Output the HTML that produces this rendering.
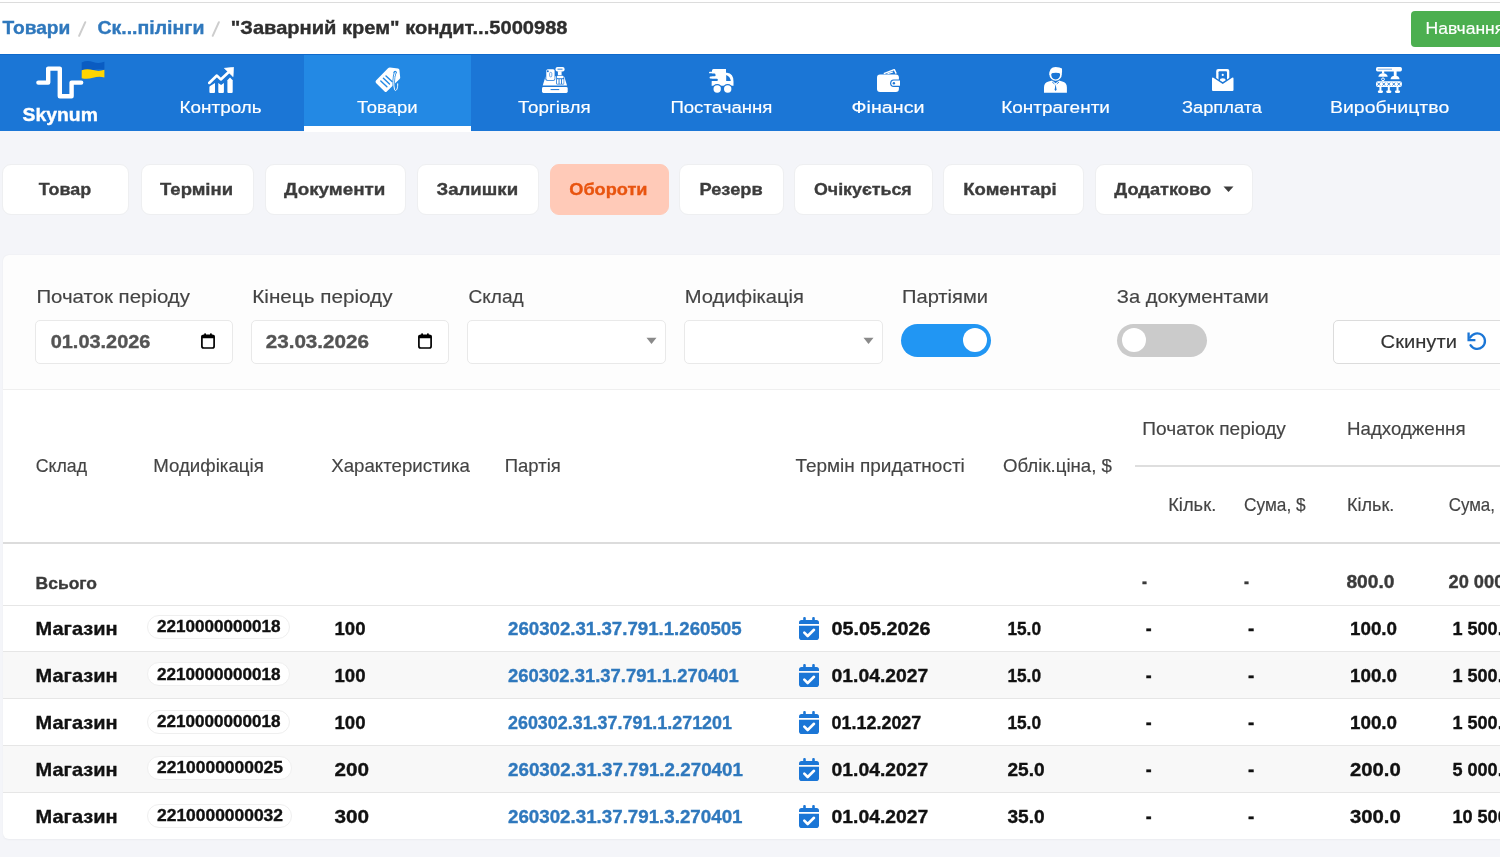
<!DOCTYPE html>
<html><head><meta charset="utf-8"><style>
html,body{margin:0;padding:0;}
body{width:1500px;height:857px;overflow:hidden;position:relative;background:#f4f5f9;font-family:"Liberation Sans",sans-serif;}
.t{position:absolute;white-space:nowrap;transform-origin:0 0;}
</style></head><body>
<div style="position:absolute;left:0px;top:0px;width:1500px;height:54px;background:#fff"></div>
<div style="position:absolute;left:0px;top:2px;width:1500px;height:1px;background:#dcdcdc"></div>
<svg style="position:absolute;left:70px;top:15px;" width="160" height="30" viewBox="70 15 160 30"><path d="M85.3 22.2L79.1 35.8M218.9 22.2L212.7 35.8" stroke="#cdcdcd" stroke-width="2" stroke-linecap="round"/></svg>
<div style="position:absolute;left:1411px;top:11px;width:120px;height:36px;background:#4caf50;border-radius:4px"></div>
<div style="position:absolute;left:0px;top:54px;width:1500px;height:77px;background:#1b76d6"></div>
<div style="position:absolute;left:304px;top:54px;width:167px;height:77px;background:#2389e4"></div>
<div style="position:absolute;left:0px;top:54px;width:1500px;height:1px;background:#0f6acc"></div>
<div style="position:absolute;left:304px;top:126px;width:167px;height:5px;background:#fff"></div>
<div style="position:absolute;left:304px;top:131px;width:167px;height:1px;background:#fff"></div>
<svg style="position:absolute;left:20px;top:55px;" width="100" height="50" viewBox="20 55 100 50"><path d="M38.4 82.6H48.2V68.6H59.8V96.3H71.6V82.6H81.2" fill="none" stroke="#fff" stroke-width="4.4" stroke-linecap="round" stroke-linejoin="round"/><path d="M81.7 62.5 Q87 60 93 62 T104.4 61.8 V70 Q99 68.5 93 70.3 T81.7 70.5Z" fill="#0a5cc2"/><path d="M81.7 70.3 Q87 68.3 93 70.1 T104.4 69.8 V77.5 Q99 76 93 77.8 T81.7 78.2Z" fill="#ffd500"/></svg>
<svg style="position:absolute;left:207.6px;top:67px;" width="26" height="26" viewBox="0 0 26 26"><polyline points="1.2,15.9 8.9,8.6 12.8,12.4 20.5,5.2" fill="none" stroke="#fff" stroke-width="2.7" stroke-linecap="round" stroke-linejoin="round"/><path d="M16.3,1.3 L25.6,0.2 L25.1,9.7 Z" fill="#fff" stroke="#fff" stroke-width="0.6" stroke-linejoin="round"/><path d="M1.4,25 V20.4 Q1.4,19.6 2.1,19.1 L7,16 V25 Q7,26 6,26 H2.4 Q1.4,26 1.4,25 Z" fill="#fff"/><path d="M10.3,25 V15.9 L13.1,18 L15.9,15.9 V25 Q15.9,26 14.9,26 H11.3 Q10.3,26 10.3,25 Z" fill="#fff"/><path d="M19.4,25 V13.2 L22,10.6 L24.7,13.2 V25 Q24.7,26 23.7,26 H20.4 Q19.4,26 19.4,25 Z" fill="#fff"/></svg>
<svg style="position:absolute;left:374.6px;top:67.2px;" width="26" height="26" viewBox="0 0 26 26"><path d="M1,13.6 L13,1.2 Q13.8,0.4 15,0.5 L23,1.4 Q24.2,1.6 24.4,2.8 L25.2,10.4 Q25.3,11.3 24.6,12 L11.8,24.6 Q10.7,25.6 9.6,24.6 L1,16 Q0,14.8 1,13.6Z" fill="#fff"/><g stroke="#2389e4" stroke-width="1.4" stroke-linecap="round"><line x1="5.8" y1="14" x2="11.9" y2="19.8"/><line x1="8.4" y1="11.2" x2="14.5" y2="17"/><line x1="11" y1="8.9" x2="17" y2="14.5"/></g><circle cx="20.1" cy="5.3" r="1.6" fill="#2389e4"/><path d="M20.2,5.5 C18.4,10 18.3,18.5 19.6,22.8 C20.6,24.8 23,22.5 22.7,16.8" fill="none" stroke="#2389e4" stroke-width="2.6" stroke-linecap="round"/><path d="M20.2,5.5 C18.4,10 18.3,18.5 19.6,22.8 C20.6,24.8 23,22.5 22.7,16.8" fill="none" stroke="#fff" stroke-width="1" stroke-linecap="round"/></svg>
<svg style="position:absolute;left:541.5px;top:67px;" width="26" height="26" viewBox="0 0 26 26"><rect x="0" y="20" width="25.7" height="5.9" rx="1.4" fill="#fff"/><line x1="8.6" y1="22.6" x2="17.2" y2="22.6" stroke="#1b76d6" stroke-width="1"/><path d="M0.7,18.6 L3.3,10.2 Q3.6,9.3 4.5,9.3 H21.3 Q22.2,9.3 22.5,10.2 L25,18.6 Z" fill="#fff"/><rect x="3.3" y="1.6" width="10" height="12.2" rx="1.8" fill="#1b76d6"/><rect x="4.3" y="2.3" width="8.3" height="10.7" rx="1.5" fill="#fff"/><circle cx="5.8" cy="4.3" r="1" fill="#1b76d6"/><rect x="7.6" y="5.4" width="2.2" height="4.5" rx="1" fill="none" stroke="#1b76d6" stroke-width="0.6"/><rect x="13.5" y="0" width="9.1" height="4.4" rx="2" fill="#fff"/><line x1="15.5" y1="2.2" x2="20.5" y2="2.2" stroke="#1b76d6" stroke-width="0.9"/><rect x="15.9" y="4.2" width="3.7" height="4.5" fill="#fff"/><rect x="14.2" y="8.3" width="8" height="9.3" rx="1" fill="#1b76d6"/><rect x="14.9" y="8.8" width="6.7" height="2.4" rx="1" fill="#fff"/><rect x="15" y="12.2" width="1.6" height="4.6" fill="#fff"/><rect x="17.5" y="12.2" width="1.6" height="4.6" fill="#fff"/><rect x="20" y="12.2" width="1.6" height="4.6" fill="#fff"/></svg>
<svg style="position:absolute;left:709.2px;top:68.6px;" width="25" height="24" viewBox="0 0 25 24"><path d="M3,1.5 Q3,0 4.5,0 H17 V3.7 H18 Q24.5,4.2 24.5,12.5 V16.8 H2.6 Z" fill="#fff"/><rect x="0" y="2.8" width="5" height="1.8" rx="0.9" fill="#fff"/><rect x="-1" y="4.6" width="7.5" height="2.9" rx="1.2" fill="#1b76d6"/><rect x="0.6" y="7.5" width="8" height="2.3" rx="1.1" fill="#fff"/><rect x="-1" y="9.8" width="9.9" height="2.3" rx="1.1" fill="#1b76d6"/><path d="M17.2,5.9 V12.1 H21.8 Q21.2,7.3 17.2,5.9 Z" fill="#1b76d6"/><circle cx="8.2" cy="20" r="5" fill="#1b76d6"/><circle cx="18.7" cy="20" r="5" fill="#1b76d6"/><circle cx="8.2" cy="20" r="3.7" fill="#fff"/><circle cx="18.7" cy="20" r="3.7" fill="#fff"/></svg>
<svg style="position:absolute;left:876.9px;top:68.6px;" width="24" height="24" viewBox="0 0 24 24"><polyline points="6.8,4.6 17.3,0.6 19.2,4.6" fill="none" stroke="#fff" stroke-width="1.4" stroke-linejoin="round"/><line x1="10.5" y1="4.6" x2="16" y2="3" stroke="#fff" stroke-width="1.2"/><rect x="0" y="5.6" width="21.9" height="17.5" rx="3" fill="#fff"/><path d="M23.5,10.4 H16.6 Q13.1,10.4 13.1,14.2 Q13.1,18 16.6,18 H23.5 Z" fill="#1b76d6"/><path d="M23,11.6 H16.8 Q14.3,11.6 14.3,14.2 Q14.3,16.8 16.8,16.8 H23 Z" fill="#fff"/><circle cx="16.9" cy="14.2" r="1.2" fill="#1b76d6"/></svg>
<svg style="position:absolute;left:1044px;top:67.2px;" width="23" height="26" viewBox="0 0 23 26"><path d="M0,25.7 V20.5 Q0,15.8 4.6,14.6 L8.2,13.6 L11.6,16.2 L15,13.6 L18.3,14.6 Q22.9,15.8 22.9,20.5 V25.7 Z" fill="#fff"/><path d="M7.6,12.2 Q11.6,15.6 15.6,12.2" fill="none" stroke="#1b76d6" stroke-width="1.1"/><ellipse cx="11.6" cy="7.4" rx="6.2" ry="6.3" fill="#fff"/><path d="M7.2,6.6 Q11.6,4.4 16.1,6.3 Q16.4,12.3 11.6,12.5 Q6.9,12.3 7.2,6.6 Z" fill="#1b76d6"/><path d="M5.4,8 Q5,0.2 11.6,0 Q16,0 18,1.6 Q18.4,5 17.4,7.6 Q15,5.4 11.6,5.6 Q8,5.6 5.4,8Z" fill="#fff"/><path d="M8.2,15 L10.4,16.9 M15,15 L12.8,16.9" stroke="#1b76d6" stroke-width="0.9" fill="none"/><path d="M11.6,17.3 L10.6,22.8 L11.6,23.9 L12.6,22.8 Z" fill="#1b76d6"/></svg>
<svg style="position:absolute;left:1211.7px;top:69.1px;" width="22" height="22" viewBox="0 0 22 22"><rect x="4.2" y="0" width="13.1" height="12" rx="2" fill="#fff"/><rect x="6.5" y="2.3" width="8.5" height="10" rx="1" fill="#1b76d6"/><circle cx="10.75" cy="5.9" r="1.1" fill="#fff"/><ellipse cx="10.75" cy="11.3" rx="2.9" ry="2" fill="#fff"/><polyline points="-0.5,7.6 10.75,14.6 22,7.6" fill="none" stroke="#1b76d6" stroke-width="2.4"/><path d="M-1,9 L10.75,16.5 L22.5,9 V16 H-1Z" fill="#1b76d6"/><path d="M0,9.6 Q0,8 1.4,8.7 L10.75,14.9 L20.1,8.7 Q21.5,8 21.5,9.6 V20.9 Q21.5,21.9 20.5,21.9 H1 Q0,21.9 0,20.9 Z" fill="#fff"/></svg>
<svg style="position:absolute;left:1376.4px;top:67px;" width="26" height="26" viewBox="0 0 26 26"><rect x="0" y="0" width="25.9" height="4.4" rx="1.6" fill="#fff"/><line x1="1.8" y1="2.2" x2="16" y2="2.2" stroke="#1b76d6" stroke-width="0.6"/><rect x="6" y="4" width="2.2" height="2.6" fill="#fff"/><path d="M2.3,9.7 Q2.8,6.2 7.1,6.2 Q11.3,6.2 11.7,9.7 Z" fill="#fff"/><rect x="17.8" y="4" width="2.8" height="5.2" fill="#fff"/><path d="M14.5,12.2 Q15,8.8 19.1,8.8 Q23.2,8.8 23.6,12.2 Z" fill="#fff"/><circle cx="7" cy="12.3" r="1.4" fill="none" stroke="#fff" stroke-width="1"/><rect x="0" y="14.2" width="25.9" height="5.8" rx="2" fill="#fff"/><path d="M1.4,15.6 L4.199999999999999,18.6 M4.199999999999999,15.6 L1.4,18.6" stroke="#1b76d6" stroke-width="0.85"/><path d="M6.4,15.6 L9.2,18.6 M9.2,15.6 L6.4,18.6" stroke="#1b76d6" stroke-width="0.85"/><path d="M11.4,15.6 L14.200000000000001,18.6 M14.200000000000001,15.6 L11.4,18.6" stroke="#1b76d6" stroke-width="0.85"/><path d="M16.400000000000002,15.6 L19.2,18.6 M19.2,15.6 L16.400000000000002,18.6" stroke="#1b76d6" stroke-width="0.85"/><path d="M21.400000000000002,15.6 L24.2,18.6 M24.2,15.6 L21.400000000000002,18.6" stroke="#1b76d6" stroke-width="0.85"/><rect x="3.4000000000000004" y="20" width="2" height="4" fill="#fff"/><rect x="1.8000000000000003" y="23.6" width="5.2" height="2.3" rx="1.1" fill="#fff"/><rect x="11.8" y="20" width="2" height="4" fill="#fff"/><rect x="10.200000000000001" y="23.6" width="5.2" height="2.3" rx="1.1" fill="#fff"/><rect x="20.5" y="20" width="2" height="4" fill="#fff"/><rect x="18.9" y="23.6" width="5.2" height="2.3" rx="1.1" fill="#fff"/></svg>
<div style="position:absolute;left:1.5px;top:163.6px;width:127px;height:51.2px;background:#fff;border-radius:9px;box-sizing:border-box;border:1px solid #eeeff1"></div>
<div style="position:absolute;left:140.5px;top:163.6px;width:113px;height:51.2px;background:#fff;border-radius:9px;box-sizing:border-box;border:1px solid #eeeff1"></div>
<div style="position:absolute;left:264.5px;top:163.6px;width:141px;height:51.2px;background:#fff;border-radius:9px;box-sizing:border-box;border:1px solid #eeeff1"></div>
<div style="position:absolute;left:416.5px;top:163.6px;width:122px;height:51.2px;background:#fff;border-radius:9px;box-sizing:border-box;border:1px solid #eeeff1"></div>
<div style="position:absolute;left:549.5px;top:163.6px;width:119px;height:51.2px;background:#ffcab8;border-radius:9px;box-sizing:border-box;border:1px solid #ffcab8"></div>
<div style="position:absolute;left:678.5px;top:163.6px;width:105px;height:51.2px;background:#fff;border-radius:9px;box-sizing:border-box;border:1px solid #eeeff1"></div>
<div style="position:absolute;left:793.5px;top:163.6px;width:139px;height:51.2px;background:#fff;border-radius:9px;box-sizing:border-box;border:1px solid #eeeff1"></div>
<div style="position:absolute;left:942.5px;top:163.6px;width:141px;height:51.2px;background:#fff;border-radius:9px;box-sizing:border-box;border:1px solid #eeeff1"></div>
<div style="position:absolute;left:1094.5px;top:163.6px;width:158px;height:51.2px;background:#fff;border-radius:9px;box-sizing:border-box;border:1px solid #eeeff1"></div>
<svg style="position:absolute;left:1223px;top:186.3px;" width="11" height="7" viewBox="0 0 11 7"><path d="M0.5 0.5H10.5L5.5 6Z" fill="#3c3c3c"/></svg>
<div style="position:absolute;left:3px;top:254.5px;width:1600px;height:135px;background:#fdfdfd;border-radius:6px 0 0 0;box-shadow:0 0 2px rgba(0,0,0,0.06)"></div>
<div style="position:absolute;left:3px;top:389px;width:1600px;height:1px;background:#efefef"></div>
<div style="position:absolute;left:35px;top:320px;width:198px;height:43.5px;background:#fff;border:1px solid #e9e9e9;border-radius:5px;box-sizing:border-box"></div>
<div style="position:absolute;left:251px;top:320px;width:198px;height:43.5px;background:#fff;border:1px solid #e9e9e9;border-radius:5px;box-sizing:border-box"></div>
<svg style="position:absolute;left:201px;top:333px;" width="14" height="16" viewBox="0 0 14 16"><rect x="0.9" y="2.4" width="12.2" height="12.6" rx="1.8" fill="none" stroke="#000" stroke-width="1.7"/><rect x="0.5" y="2" width="13" height="3.2" rx="1" fill="#000"/><rect x="3.2" y="0.3" width="1.8" height="3" rx="0.8" fill="#000"/><rect x="9" y="0.3" width="1.8" height="3" rx="0.8" fill="#000"/></svg>
<svg style="position:absolute;left:417.5px;top:333px;" width="14" height="16" viewBox="0 0 14 16"><rect x="0.9" y="2.4" width="12.2" height="12.6" rx="1.8" fill="none" stroke="#000" stroke-width="1.7"/><rect x="0.5" y="2" width="13" height="3.2" rx="1" fill="#000"/><rect x="3.2" y="0.3" width="1.8" height="3" rx="0.8" fill="#000"/><rect x="9" y="0.3" width="1.8" height="3" rx="0.8" fill="#000"/></svg>
<div style="position:absolute;left:467px;top:320px;width:199px;height:43.5px;background:#fff;border:1px solid #e9e9e9;border-radius:5px;box-sizing:border-box"></div>
<svg style="position:absolute;left:646px;top:337px;" width="11" height="8" viewBox="0 0 11 8"><path d="M0.5 0.8H10.5L5.5 7Z" fill="#8a8a8a"/></svg>
<div style="position:absolute;left:684px;top:320px;width:199px;height:43.5px;background:#fff;border:1px solid #e9e9e9;border-radius:5px;box-sizing:border-box"></div>
<svg style="position:absolute;left:863px;top:337px;" width="11" height="8" viewBox="0 0 11 8"><path d="M0.5 0.8H10.5L5.5 7Z" fill="#8a8a8a"/></svg>
<div style="position:absolute;left:900.5px;top:323.7px;width:90px;height:33.3px;background:#2196f3;border-radius:16.7px"></div>
<div style="position:absolute;left:963px;top:328.3px;width:24px;height:24px;background:#fff;border-radius:50%"></div>
<div style="position:absolute;left:1117px;top:323.7px;width:90px;height:33.3px;background:#cbcbcb;border-radius:16.7px"></div>
<div style="position:absolute;left:1121.5px;top:328.3px;width:24px;height:24px;background:#fff;border-radius:50%"></div>
<div style="position:absolute;left:1333px;top:320px;width:300px;height:44px;background:#fff;border:1px solid #dcdcdc;border-radius:5px;box-sizing:border-box"></div>
<svg style="position:absolute;left:1466px;top:331px;" width="21" height="21" viewBox="1466 331 21 21"><path d="M1470.5 345.2 A7.8 7.8 0 1 0 1470.2 337.6" fill="none" stroke="#1b76d6" stroke-width="2.3" stroke-linecap="round"/><path d="M1468.6 332.4 V340.1 H1475.4" fill="none" stroke="#1b76d6" stroke-width="2.3" stroke-linejoin="miter"/></svg>
<div style="position:absolute;left:3px;top:390px;width:1600px;height:449.2px;background:#fff;border-radius:0 0 0 6px;box-shadow:0 1px 2px rgba(0,0,0,0.04)"></div>
<div style="position:absolute;left:1135px;top:465px;width:400px;height:2px;background:#dedede"></div>
<div style="position:absolute;left:3px;top:542px;width:1600px;height:2px;background:#dcdcdc"></div>
<div style="position:absolute;left:3px;top:604.7px;width:1600px;height:1px;background:#e6e6e6"></div>
<div style="position:absolute;left:147px;top:615px;width:143px;height:24px;background:#fff;border:1px solid #efefef;border-radius:12px;box-sizing:border-box"></div>
<svg style="position:absolute;left:799px;top:617px;" width="20" height="23" viewBox="0 0 20 23"><rect x="4.2" y="0" width="2.6" height="4" rx="1.1" fill="#1b76d6"/><rect x="13.2" y="0" width="2.6" height="4" rx="1.1" fill="#1b76d6"/><path d="M0 5.5Q0 3 2.5 3H17.5Q20 3 20 5.5V6.9H0Z" fill="#1b76d6"/><path d="M0 8.8H20V20.6Q20 23.1 17.5 23.1H2.5Q0 23.1 0 20.6Z" fill="#1b76d6"/><path d="M5.3 15.6L8.7 19L15 12.8" fill="none" stroke="#fff" stroke-width="2.6" stroke-linecap="round" stroke-linejoin="round"/></svg>
<div style="position:absolute;left:3px;top:651.4px;width:1600px;height:46.89999999999998px;background:#f8f8f8"></div>
<div style="position:absolute;left:3px;top:651.4px;width:1600px;height:1px;background:#e6e6e6"></div>
<div style="position:absolute;left:147px;top:662px;width:143px;height:24px;background:#fff;border:1px solid #efefef;border-radius:12px;box-sizing:border-box"></div>
<svg style="position:absolute;left:799px;top:664px;" width="20" height="23" viewBox="0 0 20 23"><rect x="4.2" y="0" width="2.6" height="4" rx="1.1" fill="#1b76d6"/><rect x="13.2" y="0" width="2.6" height="4" rx="1.1" fill="#1b76d6"/><path d="M0 5.5Q0 3 2.5 3H17.5Q20 3 20 5.5V6.9H0Z" fill="#1b76d6"/><path d="M0 8.8H20V20.6Q20 23.1 17.5 23.1H2.5Q0 23.1 0 20.6Z" fill="#1b76d6"/><path d="M5.3 15.6L8.7 19L15 12.8" fill="none" stroke="#fff" stroke-width="2.6" stroke-linecap="round" stroke-linejoin="round"/></svg>
<div style="position:absolute;left:3px;top:698.3px;width:1600px;height:1px;background:#e6e6e6"></div>
<div style="position:absolute;left:147px;top:710px;width:143px;height:24px;background:#fff;border:1px solid #efefef;border-radius:12px;box-sizing:border-box"></div>
<svg style="position:absolute;left:799px;top:711px;" width="20" height="23" viewBox="0 0 20 23"><rect x="4.2" y="0" width="2.6" height="4" rx="1.1" fill="#1b76d6"/><rect x="13.2" y="0" width="2.6" height="4" rx="1.1" fill="#1b76d6"/><path d="M0 5.5Q0 3 2.5 3H17.5Q20 3 20 5.5V6.9H0Z" fill="#1b76d6"/><path d="M0 8.8H20V20.6Q20 23.1 17.5 23.1H2.5Q0 23.1 0 20.6Z" fill="#1b76d6"/><path d="M5.3 15.6L8.7 19L15 12.8" fill="none" stroke="#fff" stroke-width="2.6" stroke-linecap="round" stroke-linejoin="round"/></svg>
<div style="position:absolute;left:3px;top:745.3px;width:1600px;height:46.90000000000009px;background:#f8f8f8"></div>
<div style="position:absolute;left:3px;top:745.3px;width:1600px;height:1px;background:#e6e6e6"></div>
<div style="position:absolute;left:147px;top:756px;width:145px;height:24px;background:#fff;border:1px solid #efefef;border-radius:12px;box-sizing:border-box"></div>
<svg style="position:absolute;left:799px;top:758px;" width="20" height="23" viewBox="0 0 20 23"><rect x="4.2" y="0" width="2.6" height="4" rx="1.1" fill="#1b76d6"/><rect x="13.2" y="0" width="2.6" height="4" rx="1.1" fill="#1b76d6"/><path d="M0 5.5Q0 3 2.5 3H17.5Q20 3 20 5.5V6.9H0Z" fill="#1b76d6"/><path d="M0 8.8H20V20.6Q20 23.1 17.5 23.1H2.5Q0 23.1 0 20.6Z" fill="#1b76d6"/><path d="M5.3 15.6L8.7 19L15 12.8" fill="none" stroke="#fff" stroke-width="2.6" stroke-linecap="round" stroke-linejoin="round"/></svg>
<div style="position:absolute;left:3px;top:792.2px;width:1600px;height:1px;background:#e6e6e6"></div>
<div style="position:absolute;left:147px;top:804px;width:145px;height:24px;background:#fff;border:1px solid #efefef;border-radius:12px;box-sizing:border-box"></div>
<svg style="position:absolute;left:799px;top:805px;" width="20" height="23" viewBox="0 0 20 23"><rect x="4.2" y="0" width="2.6" height="4" rx="1.1" fill="#1b76d6"/><rect x="13.2" y="0" width="2.6" height="4" rx="1.1" fill="#1b76d6"/><path d="M0 5.5Q0 3 2.5 3H17.5Q20 3 20 5.5V6.9H0Z" fill="#1b76d6"/><path d="M0 8.8H20V20.6Q20 23.1 17.5 23.1H2.5Q0 23.1 0 20.6Z" fill="#1b76d6"/><path d="M5.3 15.6L8.7 19L15 12.8" fill="none" stroke="#fff" stroke-width="2.6" stroke-linecap="round" stroke-linejoin="round"/></svg>
<svg style="position:absolute;left:0;top:0;will-change:transform" width="1500" height="857" font-family="Liberation Sans">
<text x="2.40" y="34.40" font-size="18.55" font-weight="bold" fill="#2f78bd" stroke="#2f78bd" stroke-width="0.35" textLength="68.00" lengthAdjust="spacingAndGlyphs">Товари</text>
<text x="97.40" y="34.40" font-size="18.55" font-weight="bold" fill="#2f78bd" stroke="#2f78bd" stroke-width="0.35" textLength="107.01" lengthAdjust="spacingAndGlyphs">Ск...пілінги</text>
<text x="230.80" y="34.40" font-size="18.55" font-weight="bold" fill="#2e2e2e" stroke="#2e2e2e" stroke-width="0.35" textLength="336.69" lengthAdjust="spacingAndGlyphs">&quot;Заварний крем&quot; кондит...5000988</text>
<text x="1425.60" y="34.00" font-size="16.23" fill="#fff" stroke="#fff" stroke-width="0.15" textLength="78.67" lengthAdjust="spacingAndGlyphs">Навчання</text>
<text x="179.60" y="112.60" font-size="16.67" fill="#fff" stroke="#fff" stroke-width="0.15" textLength="82.00" lengthAdjust="spacingAndGlyphs">Контроль</text>
<text x="357.00" y="112.60" font-size="16.67" fill="#fff" stroke="#fff" stroke-width="0.15" textLength="60.60" lengthAdjust="spacingAndGlyphs">Товари</text>
<text x="518.00" y="112.60" font-size="16.67" fill="#fff" stroke="#fff" stroke-width="0.15" textLength="72.60" lengthAdjust="spacingAndGlyphs">Торгівля</text>
<text x="670.40" y="112.60" font-size="16.67" fill="#fff" stroke="#fff" stroke-width="0.15" textLength="102.00" lengthAdjust="spacingAndGlyphs">Постачання</text>
<text x="851.60" y="112.60" font-size="16.67" fill="#fff" stroke="#fff" stroke-width="0.15" textLength="72.89" lengthAdjust="spacingAndGlyphs">Фінанси</text>
<text x="1001.20" y="112.60" font-size="16.67" fill="#fff" stroke="#fff" stroke-width="0.15" textLength="108.80" lengthAdjust="spacingAndGlyphs">Контрагенти</text>
<text x="1182.00" y="112.60" font-size="16.67" fill="#fff" stroke="#fff" stroke-width="0.15" textLength="79.99" lengthAdjust="spacingAndGlyphs">Зарплата</text>
<text x="1330.00" y="112.60" font-size="16.67" fill="#fff" stroke="#fff" stroke-width="0.15" textLength="119.21" lengthAdjust="spacingAndGlyphs">Виробництво</text>
<text x="22.60" y="120.60" font-size="18.26" font-weight="bold" fill="#fff" stroke="#fff" stroke-width="0.35" textLength="75.30" lengthAdjust="spacingAndGlyphs">Skynum</text>
<text x="38.80" y="195.30" font-size="17.39" font-weight="bold" fill="#3c3c3c" stroke="#3c3c3c" stroke-width="0.35" textLength="52.40" lengthAdjust="spacingAndGlyphs">Товар</text>
<text x="160.00" y="195.30" font-size="17.39" font-weight="bold" fill="#3c3c3c" stroke="#3c3c3c" stroke-width="0.35" textLength="73.00" lengthAdjust="spacingAndGlyphs">Терміни</text>
<text x="284.00" y="195.30" font-size="17.39" font-weight="bold" fill="#3c3c3c" stroke="#3c3c3c" stroke-width="0.35" textLength="101.41" lengthAdjust="spacingAndGlyphs">Документи</text>
<text x="436.50" y="195.30" font-size="17.39" font-weight="bold" fill="#3c3c3c" stroke="#3c3c3c" stroke-width="0.35" textLength="81.61" lengthAdjust="spacingAndGlyphs">Залишки</text>
<text x="569.30" y="195.30" font-size="17.39" font-weight="bold" fill="#e8540f" stroke="#e8540f" stroke-width="0.35" textLength="78.19" lengthAdjust="spacingAndGlyphs">Обороти</text>
<text x="699.50" y="195.30" font-size="17.39" font-weight="bold" fill="#3c3c3c" stroke="#3c3c3c" stroke-width="0.35" textLength="63.20" lengthAdjust="spacingAndGlyphs">Резерв</text>
<text x="814.00" y="195.30" font-size="17.39" font-weight="bold" fill="#3c3c3c" stroke="#3c3c3c" stroke-width="0.35" textLength="97.70" lengthAdjust="spacingAndGlyphs">Очікується</text>
<text x="963.30" y="195.30" font-size="17.39" font-weight="bold" fill="#3c3c3c" stroke="#3c3c3c" stroke-width="0.35" textLength="93.39" lengthAdjust="spacingAndGlyphs">Коментарі</text>
<text x="1114.30" y="195.30" font-size="17.39" font-weight="bold" fill="#3c3c3c" stroke="#3c3c3c" stroke-width="0.35" textLength="96.71" lengthAdjust="spacingAndGlyphs">Додатково</text>
<text x="36.40" y="303.20" font-size="18.26" fill="#444" stroke="#444" stroke-width="0.15" textLength="153.60" lengthAdjust="spacingAndGlyphs">Початок періоду</text>
<text x="252.30" y="303.20" font-size="18.26" fill="#444" stroke="#444" stroke-width="0.15" textLength="140.21" lengthAdjust="spacingAndGlyphs">Кінець періоду</text>
<text x="468.50" y="303.20" font-size="18.26" fill="#444" stroke="#444" stroke-width="0.15" textLength="55.20" lengthAdjust="spacingAndGlyphs">Склад</text>
<text x="684.80" y="303.20" font-size="18.26" fill="#444" stroke="#444" stroke-width="0.15" textLength="119.19" lengthAdjust="spacingAndGlyphs">Модифікація</text>
<text x="902.00" y="303.20" font-size="18.26" fill="#444" stroke="#444" stroke-width="0.15" textLength="86.00" lengthAdjust="spacingAndGlyphs">Партіями</text>
<text x="1116.80" y="303.20" font-size="18.26" fill="#444" stroke="#444" stroke-width="0.15" textLength="152.00" lengthAdjust="spacingAndGlyphs">За документами</text>
<text x="50.70" y="347.80" font-size="17.97" font-weight="bold" fill="#545454" stroke="#545454" stroke-width="0.35" textLength="99.70" lengthAdjust="spacingAndGlyphs">01.03.2026</text>
<text x="265.70" y="347.80" font-size="17.97" font-weight="bold" fill="#545454" stroke="#545454" stroke-width="0.35" textLength="103.30" lengthAdjust="spacingAndGlyphs">23.03.2026</text>
<text x="1380.60" y="348.00" font-size="19.13" fill="#333" stroke="#333" stroke-width="0.15" textLength="76.30" lengthAdjust="spacingAndGlyphs">Скинути</text>
<text x="35.70" y="472.40" font-size="17.97" fill="#444" stroke="#444" stroke-width="0.15" textLength="51.30" lengthAdjust="spacingAndGlyphs">Склад</text>
<text x="153.20" y="472.40" font-size="17.97" fill="#444" stroke="#444" stroke-width="0.15" textLength="110.59" lengthAdjust="spacingAndGlyphs">Модифікація</text>
<text x="331.20" y="472.40" font-size="17.97" fill="#444" stroke="#444" stroke-width="0.15" textLength="138.78" lengthAdjust="spacingAndGlyphs">Характеристика</text>
<text x="504.80" y="472.40" font-size="17.97" fill="#444" stroke="#444" stroke-width="0.15" textLength="56.00" lengthAdjust="spacingAndGlyphs">Партія</text>
<text x="795.40" y="472.40" font-size="17.97" fill="#444" stroke="#444" stroke-width="0.15" textLength="169.41" lengthAdjust="spacingAndGlyphs">Термін придатності</text>
<text x="1003.00" y="472.40" font-size="17.97" fill="#444" stroke="#444" stroke-width="0.15" textLength="109.00" lengthAdjust="spacingAndGlyphs">Облік.ціна, $</text>
<text x="1142.30" y="434.70" font-size="17.97" fill="#444" stroke="#444" stroke-width="0.15" textLength="143.60" lengthAdjust="spacingAndGlyphs">Початок періоду</text>
<text x="1347.00" y="434.70" font-size="17.97" fill="#444" stroke="#444" stroke-width="0.15" textLength="118.51" lengthAdjust="spacingAndGlyphs">Надходження</text>
<text x="1168.20" y="510.60" font-size="17.97" fill="#444" stroke="#444" stroke-width="0.15" textLength="48.09" lengthAdjust="spacingAndGlyphs">Кільк.</text>
<text x="1244.00" y="510.60" font-size="17.97" fill="#444" stroke="#444" stroke-width="0.15" textLength="61.61" lengthAdjust="spacingAndGlyphs">Сума, $</text>
<text x="1347.00" y="510.60" font-size="17.97" fill="#444" stroke="#444" stroke-width="0.15" textLength="47.39" lengthAdjust="spacingAndGlyphs">Кільк.</text>
<text x="1448.70" y="510.60" font-size="17.97" fill="#444" stroke="#444" stroke-width="0.15" textLength="46.31" lengthAdjust="spacingAndGlyphs">Сума,</text>
<text x="35.60" y="588.50" font-size="17.25" font-weight="bold" fill="#3a3a3a" stroke="#3a3a3a" stroke-width="0.35" textLength="61.40" lengthAdjust="spacingAndGlyphs">Всього</text>
<text x="1142.00" y="588.40" font-size="17.54" font-weight="bold" fill="#3a3a3a" stroke="#3a3a3a" stroke-width="0.35" textLength="5.00" lengthAdjust="spacingAndGlyphs">-</text>
<text x="1244.00" y="588.40" font-size="17.54" font-weight="bold" fill="#3a3a3a" stroke="#3a3a3a" stroke-width="0.35" textLength="5.00" lengthAdjust="spacingAndGlyphs">-</text>
<text x="1346.40" y="588.40" font-size="17.54" font-weight="bold" fill="#3a3a3a" stroke="#3a3a3a" stroke-width="0.35" textLength="48.01" lengthAdjust="spacingAndGlyphs">800.0</text>
<text x="1448.50" y="588.40" font-size="17.54" font-weight="bold" fill="#3a3a3a" stroke="#3a3a3a" stroke-width="0.35" textLength="70.99" lengthAdjust="spacingAndGlyphs">20 000.0</text>
<text x="35.60" y="634.70" font-size="18.84" font-weight="bold" fill="#111" stroke="#111" stroke-width="0.35" textLength="82.00" lengthAdjust="spacingAndGlyphs">Магазин</text>
<text x="157.00" y="632.30" font-size="15.65" font-weight="bold" fill="#111" stroke="#111" stroke-width="0.35" textLength="123.50" lengthAdjust="spacingAndGlyphs">2210000000018</text>
<text x="334.50" y="634.70" font-size="18.84" font-weight="bold" fill="#111" stroke="#111" stroke-width="0.35" textLength="31.01" lengthAdjust="spacingAndGlyphs">100</text>
<text x="508.00" y="634.70" font-size="18.26" font-weight="bold" fill="#2f78bd" stroke="#2f78bd" stroke-width="0.35" textLength="233.60" lengthAdjust="spacingAndGlyphs">260302.31.37.791.1.260505</text>
<text x="831.60" y="634.70" font-size="18.26" font-weight="bold" fill="#111" stroke="#111" stroke-width="0.35" textLength="99.00" lengthAdjust="spacingAndGlyphs">05.05.2026</text>
<text x="1007.40" y="634.70" font-size="18.26" font-weight="bold" fill="#111" stroke="#111" stroke-width="0.35" textLength="33.61" lengthAdjust="spacingAndGlyphs">15.0</text>
<text x="1145.80" y="634.70" font-size="18.26" font-weight="bold" fill="#111" stroke="#111" stroke-width="0.35" textLength="5.90" lengthAdjust="spacingAndGlyphs">-</text>
<text x="1248.00" y="634.70" font-size="18.26" font-weight="bold" fill="#111" stroke="#111" stroke-width="0.35" textLength="6.30" lengthAdjust="spacingAndGlyphs">-</text>
<text x="1350.00" y="634.70" font-size="18.26" font-weight="bold" fill="#111" stroke="#111" stroke-width="0.35" textLength="47.01" lengthAdjust="spacingAndGlyphs">100.0</text>
<text x="1452.40" y="634.70" font-size="18.26" font-weight="bold" fill="#111" stroke="#111" stroke-width="0.35" textLength="60.32" lengthAdjust="spacingAndGlyphs">1 500.0</text>
<text x="35.60" y="681.90" font-size="18.84" font-weight="bold" fill="#111" stroke="#111" stroke-width="0.35" textLength="82.00" lengthAdjust="spacingAndGlyphs">Магазин</text>
<text x="157.00" y="679.50" font-size="15.65" font-weight="bold" fill="#111" stroke="#111" stroke-width="0.35" textLength="123.50" lengthAdjust="spacingAndGlyphs">2210000000018</text>
<text x="334.50" y="681.90" font-size="18.84" font-weight="bold" fill="#111" stroke="#111" stroke-width="0.35" textLength="31.01" lengthAdjust="spacingAndGlyphs">100</text>
<text x="508.00" y="681.90" font-size="18.26" font-weight="bold" fill="#2f78bd" stroke="#2f78bd" stroke-width="0.35" textLength="230.70" lengthAdjust="spacingAndGlyphs">260302.31.37.791.1.270401</text>
<text x="831.60" y="681.90" font-size="18.26" font-weight="bold" fill="#111" stroke="#111" stroke-width="0.35" textLength="96.60" lengthAdjust="spacingAndGlyphs">01.04.2027</text>
<text x="1007.40" y="681.90" font-size="18.26" font-weight="bold" fill="#111" stroke="#111" stroke-width="0.35" textLength="33.61" lengthAdjust="spacingAndGlyphs">15.0</text>
<text x="1145.80" y="681.90" font-size="18.26" font-weight="bold" fill="#111" stroke="#111" stroke-width="0.35" textLength="5.90" lengthAdjust="spacingAndGlyphs">-</text>
<text x="1248.00" y="681.90" font-size="18.26" font-weight="bold" fill="#111" stroke="#111" stroke-width="0.35" textLength="6.30" lengthAdjust="spacingAndGlyphs">-</text>
<text x="1350.00" y="681.90" font-size="18.26" font-weight="bold" fill="#111" stroke="#111" stroke-width="0.35" textLength="47.01" lengthAdjust="spacingAndGlyphs">100.0</text>
<text x="1452.40" y="681.90" font-size="18.26" font-weight="bold" fill="#111" stroke="#111" stroke-width="0.35" textLength="60.32" lengthAdjust="spacingAndGlyphs">1 500.0</text>
<text x="35.60" y="729.00" font-size="18.84" font-weight="bold" fill="#111" stroke="#111" stroke-width="0.35" textLength="82.00" lengthAdjust="spacingAndGlyphs">Магазин</text>
<text x="157.00" y="726.60" font-size="15.65" font-weight="bold" fill="#111" stroke="#111" stroke-width="0.35" textLength="123.50" lengthAdjust="spacingAndGlyphs">2210000000018</text>
<text x="334.50" y="729.00" font-size="18.84" font-weight="bold" fill="#111" stroke="#111" stroke-width="0.35" textLength="31.01" lengthAdjust="spacingAndGlyphs">100</text>
<text x="508.00" y="729.00" font-size="18.26" font-weight="bold" fill="#2f78bd" stroke="#2f78bd" stroke-width="0.35" textLength="224.00" lengthAdjust="spacingAndGlyphs">260302.31.37.791.1.271201</text>
<text x="831.60" y="729.00" font-size="18.26" font-weight="bold" fill="#111" stroke="#111" stroke-width="0.35" textLength="89.70" lengthAdjust="spacingAndGlyphs">01.12.2027</text>
<text x="1007.40" y="729.00" font-size="18.26" font-weight="bold" fill="#111" stroke="#111" stroke-width="0.35" textLength="33.61" lengthAdjust="spacingAndGlyphs">15.0</text>
<text x="1145.80" y="729.00" font-size="18.26" font-weight="bold" fill="#111" stroke="#111" stroke-width="0.35" textLength="5.90" lengthAdjust="spacingAndGlyphs">-</text>
<text x="1248.00" y="729.00" font-size="18.26" font-weight="bold" fill="#111" stroke="#111" stroke-width="0.35" textLength="6.30" lengthAdjust="spacingAndGlyphs">-</text>
<text x="1350.00" y="729.00" font-size="18.26" font-weight="bold" fill="#111" stroke="#111" stroke-width="0.35" textLength="47.01" lengthAdjust="spacingAndGlyphs">100.0</text>
<text x="1452.40" y="729.00" font-size="18.26" font-weight="bold" fill="#111" stroke="#111" stroke-width="0.35" textLength="60.32" lengthAdjust="spacingAndGlyphs">1 500.0</text>
<text x="35.60" y="775.80" font-size="18.84" font-weight="bold" fill="#111" stroke="#111" stroke-width="0.35" textLength="82.00" lengthAdjust="spacingAndGlyphs">Магазин</text>
<text x="157.00" y="773.40" font-size="15.65" font-weight="bold" fill="#111" stroke="#111" stroke-width="0.35" textLength="126.00" lengthAdjust="spacingAndGlyphs">2210000000025</text>
<text x="334.50" y="775.80" font-size="18.84" font-weight="bold" fill="#111" stroke="#111" stroke-width="0.35" textLength="34.51" lengthAdjust="spacingAndGlyphs">200</text>
<text x="508.00" y="775.80" font-size="18.26" font-weight="bold" fill="#2f78bd" stroke="#2f78bd" stroke-width="0.35" textLength="234.90" lengthAdjust="spacingAndGlyphs">260302.31.37.791.2.270401</text>
<text x="831.60" y="775.80" font-size="18.26" font-weight="bold" fill="#111" stroke="#111" stroke-width="0.35" textLength="96.60" lengthAdjust="spacingAndGlyphs">01.04.2027</text>
<text x="1007.40" y="775.80" font-size="18.26" font-weight="bold" fill="#111" stroke="#111" stroke-width="0.35" textLength="37.21" lengthAdjust="spacingAndGlyphs">25.0</text>
<text x="1145.80" y="775.80" font-size="18.26" font-weight="bold" fill="#111" stroke="#111" stroke-width="0.35" textLength="5.90" lengthAdjust="spacingAndGlyphs">-</text>
<text x="1248.00" y="775.80" font-size="18.26" font-weight="bold" fill="#111" stroke="#111" stroke-width="0.35" textLength="6.30" lengthAdjust="spacingAndGlyphs">-</text>
<text x="1350.00" y="775.80" font-size="18.26" font-weight="bold" fill="#111" stroke="#111" stroke-width="0.35" textLength="50.71" lengthAdjust="spacingAndGlyphs">200.0</text>
<text x="1452.40" y="775.80" font-size="18.26" font-weight="bold" fill="#111" stroke="#111" stroke-width="0.35" textLength="60.32" lengthAdjust="spacingAndGlyphs">5 000.0</text>
<text x="35.60" y="823.00" font-size="18.84" font-weight="bold" fill="#111" stroke="#111" stroke-width="0.35" textLength="82.00" lengthAdjust="spacingAndGlyphs">Магазин</text>
<text x="157.00" y="820.60" font-size="15.65" font-weight="bold" fill="#111" stroke="#111" stroke-width="0.35" textLength="126.00" lengthAdjust="spacingAndGlyphs">2210000000032</text>
<text x="334.50" y="823.00" font-size="18.84" font-weight="bold" fill="#111" stroke="#111" stroke-width="0.35" textLength="34.51" lengthAdjust="spacingAndGlyphs">300</text>
<text x="508.00" y="823.00" font-size="18.26" font-weight="bold" fill="#2f78bd" stroke="#2f78bd" stroke-width="0.35" textLength="234.50" lengthAdjust="spacingAndGlyphs">260302.31.37.791.3.270401</text>
<text x="831.60" y="823.00" font-size="18.26" font-weight="bold" fill="#111" stroke="#111" stroke-width="0.35" textLength="96.60" lengthAdjust="spacingAndGlyphs">01.04.2027</text>
<text x="1007.40" y="823.00" font-size="18.26" font-weight="bold" fill="#111" stroke="#111" stroke-width="0.35" textLength="37.21" lengthAdjust="spacingAndGlyphs">35.0</text>
<text x="1145.80" y="823.00" font-size="18.26" font-weight="bold" fill="#111" stroke="#111" stroke-width="0.35" textLength="5.90" lengthAdjust="spacingAndGlyphs">-</text>
<text x="1248.00" y="823.00" font-size="18.26" font-weight="bold" fill="#111" stroke="#111" stroke-width="0.35" textLength="6.30" lengthAdjust="spacingAndGlyphs">-</text>
<text x="1350.00" y="823.00" font-size="18.26" font-weight="bold" fill="#111" stroke="#111" stroke-width="0.35" textLength="50.71" lengthAdjust="spacingAndGlyphs">300.0</text>
<text x="1452.40" y="823.00" font-size="18.26" font-weight="bold" fill="#111" stroke="#111" stroke-width="0.35" textLength="70.37" lengthAdjust="spacingAndGlyphs">10 500.0</text>
</svg>
</body></html>
